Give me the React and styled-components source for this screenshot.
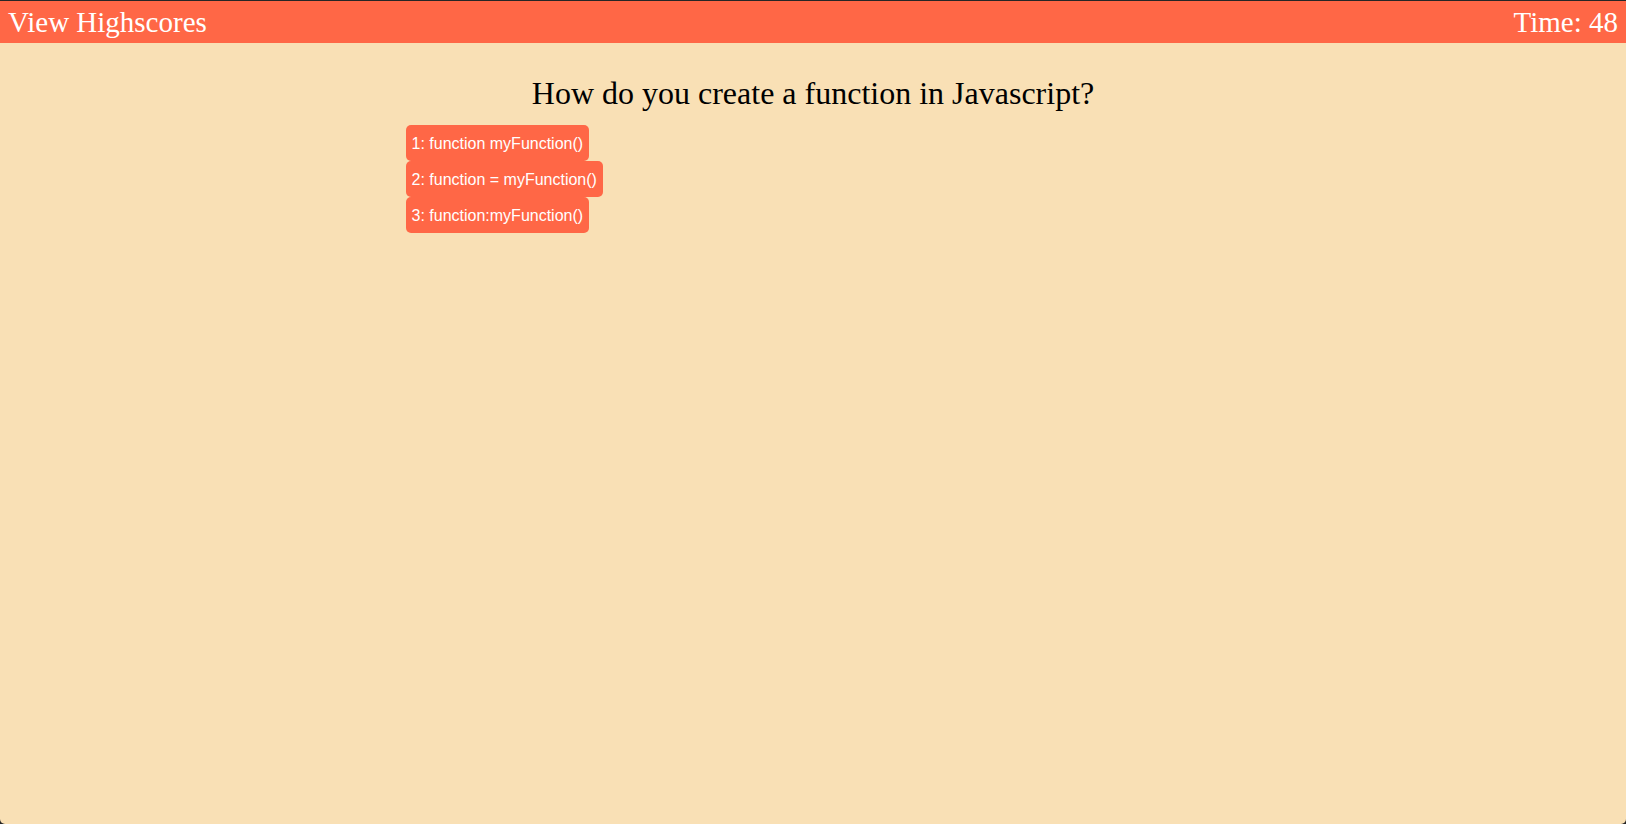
import React from "react";
import styled, { createGlobalStyle } from "styled-components";

const GlobalStyle = createGlobalStyle`
  * { box-sizing: border-box; }
  html { background: #262626; }
  body {
    margin: 0;
    font-family: "Liberation Serif", "Times New Roman", serif;
  }
`;

const Page = styled.div`
  min-height: 100vh;
  border-top: 1px solid #262626;
  border-radius: 0 0 5px 5px;
  background: #f9e0b5;
  color: #000;
`;

const TopBar = styled.header`
  display: flex;
  justify-content: space-between;
  align-items: center;
  padding: 5px 8px;
  background: #ff6746;
  color: #fff;
  font-size: 29px;
  line-height: 32px;
`;

const ScoresLink = styled.a`
  color: inherit;
  text-decoration: none;
`;

const Quiz = styled.main`
  width: calc(50% + 2px);
  margin: 0 auto;
  padding-top: 32px;
`;

const Question = styled.h1`
  margin: 0 0 14px;
  font-size: 32px;
  font-weight: 400;
  line-height: 36px;
  text-align: center;
`;

const Choices = styled.div`
  display: flex;
  flex-direction: column;
  align-items: flex-start;
`;

const Choice = styled.button`
  padding: 9px 6px 7px;
  border: 0;
  border-radius: 5px;
  background: #ff6746;
  color: #fff;
  font-family: "Liberation Sans", Arial, sans-serif;
  font-size: 16px;
  line-height: 20px;
`;

const choices = ["function myFunction()", "function = myFunction()", "function:myFunction()"];

export default function App() {
  return (
    <Page>
      <GlobalStyle />
      <TopBar>
        <ScoresLink href="#highscores">View Highscores</ScoresLink>
        <span>Time: 48</span>
      </TopBar>
      <Quiz>
        <Question>How do you create a function in Javascript?</Question>
        <Choices>
          {choices.map((choice, index) => (
            <Choice key={choice} type="button">{`${index + 1}: ${choice}`}</Choice>
          ))}
        </Choices>
      </Quiz>
    </Page>
  );
}
